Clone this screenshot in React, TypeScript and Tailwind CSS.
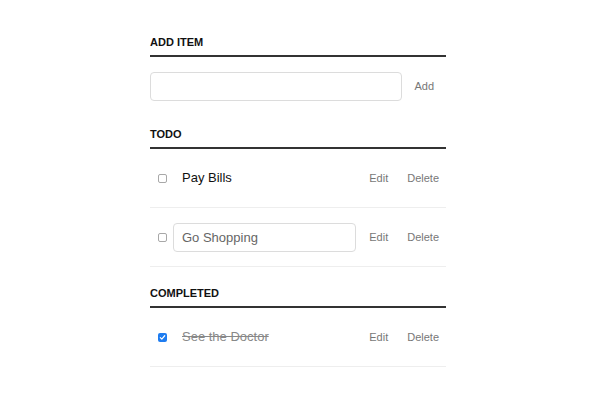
import React from "react";

interface Task {
  id: number;
  title: string;
  editing?: boolean;
  done?: boolean;
}

const todo: Task[] = [
  { id: 1, title: "Pay Bills" },
  { id: 2, title: "Go Shopping", editing: true },
];

const completed: Task[] = [{ id: 3, title: "See the Doctor", done: true }];

const Heading = ({ label, className }: { label: string; className?: string }) => (
  <h3
    className={`text-[11px] leading-[13px] font-bold uppercase text-[#111] pb-[6px] border-b-2 border-[#333] ${className ?? ""}`}
  >
    {label}
  </h3>
);

const Checkbox = ({ checked }: { checked?: boolean }) =>
  checked ? (
    <span className="w-[9px] h-[9px] rounded-[2px] bg-[#1e7cf0] flex items-center justify-center shrink-0">
      <svg width="7" height="7" viewBox="0 0 8 8" fill="none">
        <path d="M1.5 4.2 L3.2 5.8 L6.5 2" stroke="white" strokeWidth="1.4" strokeLinecap="round" strokeLinejoin="round" />
      </svg>
    </span>
  ) : (
    <span className="w-[9px] h-[9px] rounded-[2px] border border-[#a8a8a8] bg-white shrink-0" />
  );

const TaskRow = ({ task }: { task: Task }) => (
  <li className="flex items-center h-[59px] border-b border-[#eeeeee] pl-[8px] pr-[7px]">
    <Checkbox checked={task.done} />
    {task.editing ? (
      <input
        defaultValue={task.title}
        className="ml-[6px] flex-1 min-w-0 h-[29px] border border-[#dcdcdc] rounded-[4px] pl-[8px] text-[13px] text-[#666] outline-none"
      />
    ) : (
      <label
        className={`ml-[6px] flex-1 min-w-0 border border-transparent pl-[8px] text-[13px] ${
          task.done ? "text-[#888] line-through" : "text-[#111]"
        }`}
      >
        {task.title}
      </label>
    )}
    <button className="ml-[13px] text-[11px] text-[#777]">Edit</button>
    <button className="ml-[19px] text-[11px] text-[#777]">Delete</button>
  </li>
);

export default function App() {
  return (
    <div className="w-[600px] h-[400px] bg-white" style={{ fontFamily: '"Liberation Sans", Arial, sans-serif' }}>
      <div className="ml-[150px] w-[296px] pt-[36px]">
        {/* Add item */}
        <Heading label="Add Item" />
        <div className="flex items-center mt-[15px]">
          <input className="flex-1 min-w-0 h-[29px] border border-[#dcdcdc] rounded-[4px] outline-none" />
          <button className="px-[12px] text-[11px] text-[#777]">Add</button>
        </div>

        {/* Todo */}
        <Heading label="Todo" className="mt-[27px]" />
        <ul>
          {todo.map((t) => (
            <TaskRow key={t.id} task={t} />
          ))}
        </ul>

        {/* Completed */}
        <Heading label="Completed" className="mt-[20px]" />
        <ul>
          {completed.map((t) => (
            <TaskRow key={t.id} task={t} />
          ))}
        </ul>
      </div>
    </div>
  );
}
